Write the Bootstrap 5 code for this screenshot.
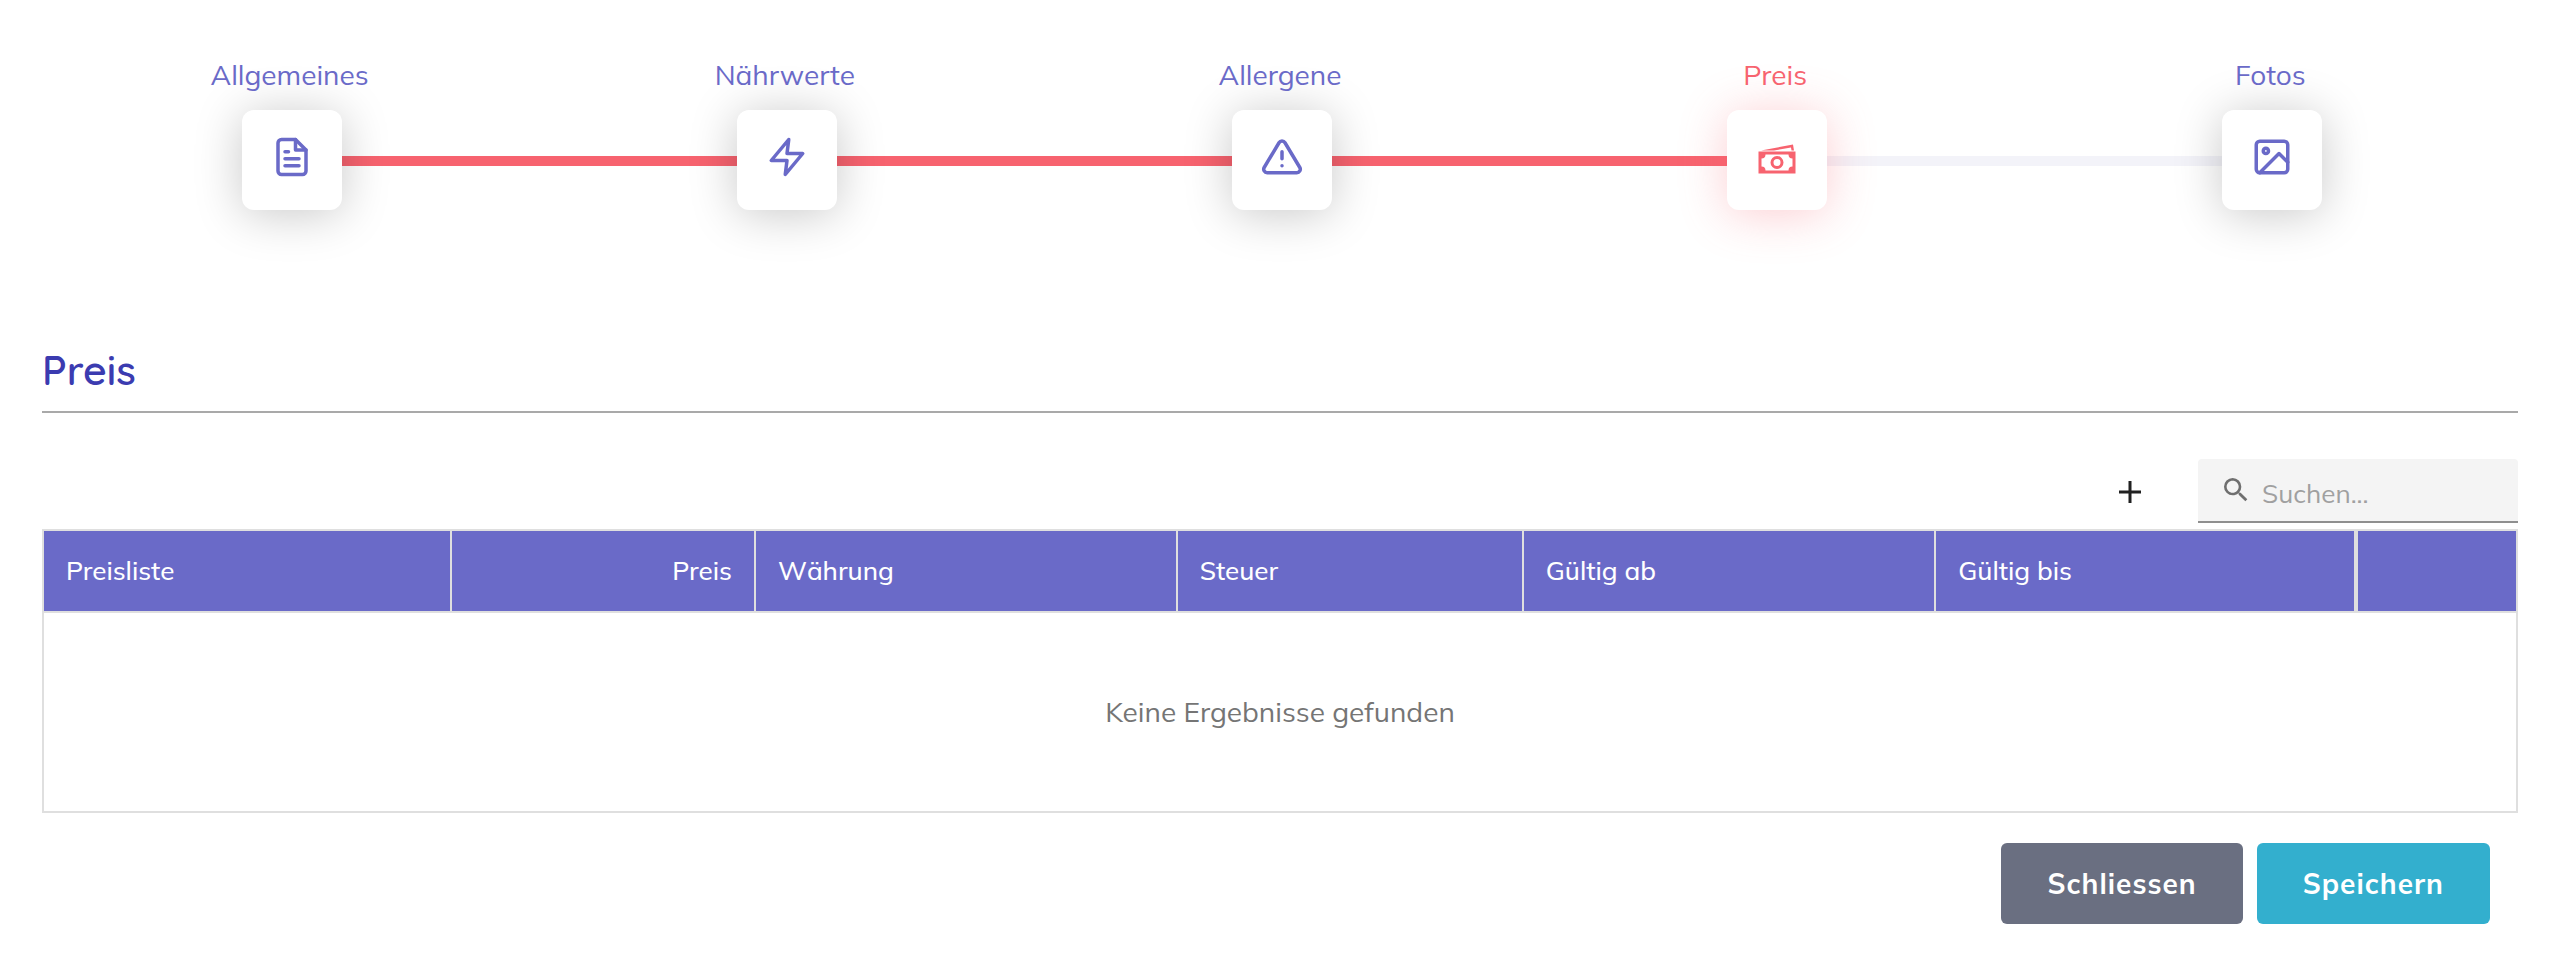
<!doctype html>
<html lang="de">
<head>
<meta charset="utf-8">
<meta name="viewport" content="width=device-width, initial-scale=1">
<title>Preis</title>
<link href="https://cdn.jsdelivr.net/npm/bootstrap@5.3.0/dist/css/bootstrap.min.css" rel="stylesheet">
<style>
  :root { --violet: #6a6ac8; --coral: #f7636f; --grid-line: #dfdfdf; }
  body { font-family: Mulish, "Open Sans", sans-serif; font-size: 28px; line-height: 40px; background: #fff; }
  .page { padding: 55px 42px 46px; }

  /* Wizard steps */
  .steps { display: grid; grid-template-columns: repeat(5, 1fr); }
  .step { position: relative; display: flex; flex-direction: column; align-items: center; color: var(--violet); text-decoration: none; }
  .step-track { position: absolute; bottom: 44px; left: 50%; width: 100%; height: 10px; background: #f3f3f9; }
  .step-track.done { background: var(--coral); }
  .step-label { position: relative; z-index: 2; }
  .step-box { position: relative; z-index: 1; width: 100px; height: 100px; margin: 15px 0 0 4px; padding-bottom: 7px; border-radius: 12px; background: #fff; box-shadow: 0 4px 48px rgba(0, 0, 0, .22); }
  .step.active { color: var(--coral); }
  .step.active .step-box { box-shadow: 0 4px 48px rgba(247, 99, 111, .32); }

  .section-title { margin: 135px 0 0; padding-bottom: 16px; border-bottom: 2px solid #a9a9a9; font-family: Quicksand, Mulish, "Open Sans", sans-serif; font-size: 41px; font-weight: 600; line-height: 50px; color: #3b3bb0; }

  .toolbar { margin-top: 46px; margin-bottom: 6px; gap: 46px; }
  .add-btn { width: 44px; height: 46px; color: #212121; }
  .add-btn svg { margin-top: 2px; }
  .search-box { width: 320px; height: 64px; padding: 0 22px; gap: 10px; background: #f4f4f4; border-bottom: 2px solid #8f8f8f; border-radius: 4px 4px 0 0; color: #6f6f6f; }
  .search-box input { min-width: 0; padding: 8px 0 0; border: 0; background: transparent; font-size: 26px; line-height: 36px; color: #444; outline: 0; }
  .search-box input::placeholder { color: #a0a0a0; opacity: 1; }

  .price-table { width: 100%; table-layout: fixed; border-collapse: separate; border-spacing: 0; border: 2px solid var(--grid-line); }
  .price-table th { height: 82px; padding: 0 22px; background: var(--violet); color: #fff; font-size: 26px; font-weight: 500; border-bottom: 2px solid var(--grid-line); border-right: 2px solid var(--grid-line); }
  .price-table th:nth-last-child(2) { border-right-width: 4px; }
  .price-table th:last-child { border-right: 0; }
  .price-table td { height: 198px; text-align: center; color: #757575; }

  .actions { margin-top: 30px; padding-right: 28px; gap: 14px; }
  .act-btn { padding: 19px 46px; border: 0; border-radius: 6px; font-size: 28px; line-height: 43px; font-weight: 700; letter-spacing: 1px; color: #fff; }
  .act-close, .act-close:hover { background: #6a6f81; color: #fff; }
  .act-save, .act-save:hover { background: #33afce; color: #fff; }
</style>
</head>
<body>
<main class="page">
  <nav class="steps" aria-label="Schritte">
    <a class="step" href="#allgemeines">
      <span class="step-track done"></span>
      <span class="step-label">Allgemeines</span>
      <span class="step-box d-flex align-items-center justify-content-center">
        <svg width="42" height="42" viewBox="0 0 24 24" fill="none" stroke="currentColor" stroke-width="2" stroke-linecap="round" stroke-linejoin="round"><path d="M14 2H6a2 2 0 0 0-2 2v16a2 2 0 0 0 2 2h12a2 2 0 0 0 2-2V8z"/><path d="M14 2v6h6M16 13H8M16 17H8M10 9H8"/></svg>
      </span>
    </a>
    <a class="step" href="#naehrwerte">
      <span class="step-track done"></span>
      <span class="step-label">Nährwerte</span>
      <span class="step-box d-flex align-items-center justify-content-center">
        <svg width="42" height="42" viewBox="0 0 24 24" fill="none" stroke="currentColor" stroke-width="2" stroke-linecap="round" stroke-linejoin="round"><path d="M13 2 3 14h9l-1 8 10-12h-9z"/></svg>
      </span>
    </a>
    <a class="step" href="#allergene">
      <span class="step-track done"></span>
      <span class="step-label">Allergene</span>
      <span class="step-box d-flex align-items-center justify-content-center">
        <svg width="42" height="42" viewBox="0 0 24 24" fill="none" stroke="currentColor" stroke-width="2" stroke-linecap="round" stroke-linejoin="round"><path d="M10.29 3.86 1.82 18a2 2 0 0 0 1.71 3h16.94a2 2 0 0 0 1.71-3L13.71 3.86a2 2 0 0 0-3.42 0zM12 9v4M12 17h.01"/></svg>
      </span>
    </a>
    <a class="step active" href="#preis" aria-current="step">
      <span class="step-track"></span>
      <span class="step-label">Preis</span>
      <span class="step-box d-flex align-items-center justify-content-center">
        <svg width="42" height="42" viewBox="0 0 42 42" fill="currentColor"><path fill-rule="evenodd" d="M2.500 15.500h37v22h-37zM9.500 18.500a4 4 0 0 1-4 4v8a4 4 0 0 1 4 4h23a4 4 0 0 1 4-4v-8a4 4 0 0 1-4-4z"/><circle cx="21" cy="26.500" r="5" fill="none" stroke="currentColor" stroke-width="3"/><path d="M5 14.500 37 8.500l1 6h-2.500l-.500-3-17 3z"/></svg>
      </span>
    </a>
    <a class="step" href="#fotos">
      <span class="step-label">Fotos</span>
      <span class="step-box d-flex align-items-center justify-content-center">
        <svg width="42" height="42" viewBox="0 0 24 24" fill="none" stroke="currentColor" stroke-width="2" stroke-linecap="round" stroke-linejoin="round"><rect x="3" y="3" width="18" height="18" rx="2"/><circle cx="8.500" cy="8.500" r="1.500"/><path d="m21 15-5-5L5 21"/></svg>
      </span>
    </a>
  </nav>

  <h1 class="section-title">Preis</h1>

  <div class="toolbar d-flex justify-content-end align-items-center">
    <button type="button" class="add-btn btn border-0 p-0 d-flex align-items-center justify-content-center" aria-label="Hinzufügen">
      <svg width="22" height="22" viewBox="0 0 22 22" fill="none" stroke="currentColor" stroke-width="3"><path d="M11 0v22M0 11h22"/></svg>
    </button>
    <label class="search-box d-flex align-items-center">
      <svg class="flex-shrink-0" width="32" height="32" viewBox="0 0 24 24" fill="currentColor"><path d="M15.500 14h-.790l-.280-.270A6.470 6.470 0 0 0 16 9.500 6.500 6.500 0 1 0 9.500 16c1.610 0 3.090-.590 4.230-1.570l.270.280v.790l5 4.990L20.490 19zm-6 0C7.010 14 5 11.990 5 9.500S7.010 5 9.500 5 14 7.010 14 9.500 11.990 14 9.500 14z"/></svg>
      <input class="flex-grow-1" type="search" placeholder="Suchen..." aria-label="Suchen">
    </label>
  </div>

  <table class="price-table">
    <colgroup>
      <col style="width:16.510%"><col style="width:12.290%"><col style="width:17.060%"><col style="width:14%"><col style="width:16.690%"><col style="width:17.060%"><col style="width:6.390%">
    </colgroup>
    <thead>
      <tr>
        <th scope="col">Preisliste</th>
        <th scope="col" class="text-end">Preis</th>
        <th scope="col">Währung</th>
        <th scope="col">Steuer</th>
        <th scope="col">Gültig ab</th>
        <th scope="col">Gültig bis</th>
        <th></th>
      </tr>
    </thead>
    <tbody>
      <tr><td colspan="7">Keine Ergebnisse gefunden</td></tr>
    </tbody>
  </table>

  <div class="actions d-flex justify-content-end">
    <button type="button" class="btn act-btn act-close">Schliessen</button>
    <button type="button" class="btn act-btn act-save">Speichern</button>
  </div>
</main>
<script src="https://cdn.jsdelivr.net/npm/bootstrap@5.3.0/dist/js/bootstrap.bundle.min.js"></script>
</body>
</html>
